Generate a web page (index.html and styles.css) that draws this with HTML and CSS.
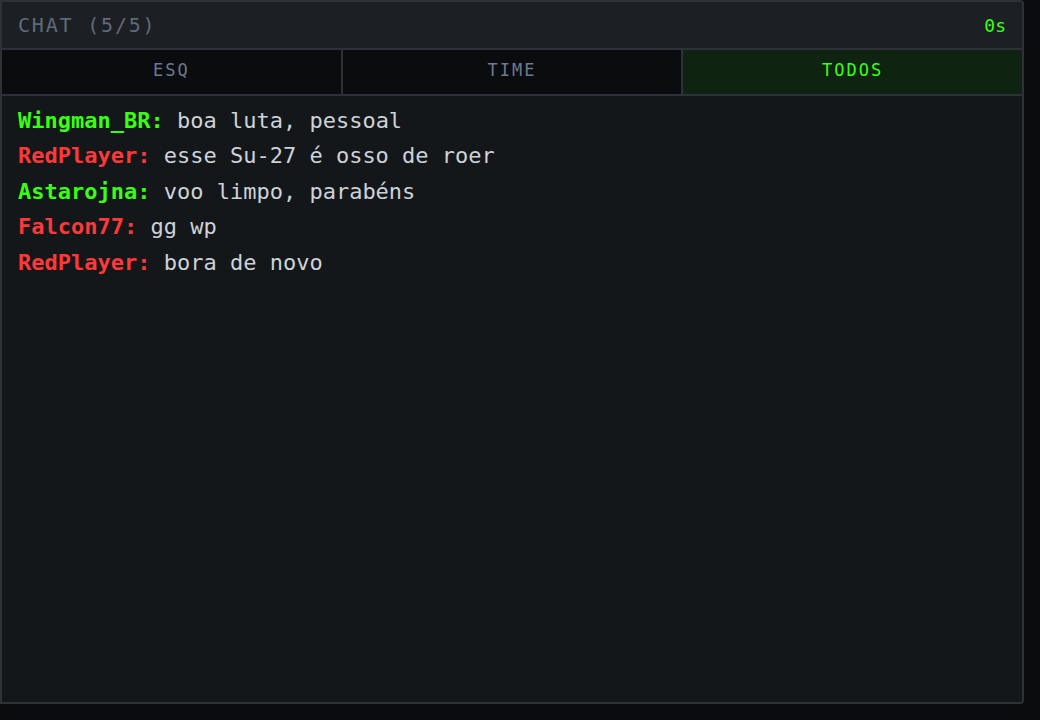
FILE: index.html
```html
<!DOCTYPE html>
<html lang="pt-BR">
<head>
    <meta charset="UTF-8">
    <meta name="viewport" content="width=device-width, initial-scale=1.0">
    <title>Chat</title>
    <link rel="stylesheet" href="styles.css">
</head>
<body>
    <div class="chat-panel">
        <div class="chat-header">
            <span class="chat-title">CHAT (5/5)</span>
            <span class="chat-timer">0s</span>
        </div>

        <div class="chat-tabs">
            <button class="tab">ESQ</button>
            <button class="tab">TIME</button>
            <button class="tab active">TODOS</button>
        </div>

        <div class="chat-messages">
            <div class="msg"><span class="name green">Wingman_BR:</span> boa luta, pessoal</div>
            <div class="msg"><span class="name red">RedPlayer:</span> esse Su-27 é osso de roer</div>
            <div class="msg"><span class="name green">Astarojna:</span> voo limpo, parabéns</div>
            <div class="msg"><span class="name red">Falcon77:</span> gg wp</div>
            <div class="msg"><span class="name red">RedPlayer:</span> bora de novo</div>
        </div>
    </div>
</body>
</html>
```

FILE: styles.css
```css
:root {
    --bg-page: #0b0c0e;
    --bg-panel: #14171a;
    --bg-header: #1c1f24;
    --border: #2e3138;
    --text-muted: #5f6b7a;
    --green: #39ff14;
    --red: #ff3838;
}

* {
    margin: 0;
    padding: 0;
    box-sizing: border-box;
    font-family: 'DejaVu Sans Mono', 'Liberation Mono', monospace;
}

body {
    background: var(--bg-page);
    width: 1040px;
    height: 720px;
}

.chat-panel {
    width: 1024px;
    height: 704px;
    background: var(--bg-panel);
    border: 2px solid var(--border);
    border-radius: 0 4px 4px 0;
    display: flex;
    flex-direction: column;
}

.chat-header {
    height: 48px;
    background: var(--bg-header);
    border-bottom: 2px solid var(--border);
    display: flex;
    align-items: center;
    justify-content: space-between;
    padding: 0 16px;
}

.chat-title {
    font-size: 20px;
    letter-spacing: 1.8px;
    color: var(--text-muted);
}

.chat-timer {
    font-size: 18px;
    color: var(--green);
}

.chat-tabs {
    display: grid;
    grid-template-columns: 1fr 1fr 1fr;
    gap: 2px;
    background: var(--border);
    border-bottom: 2px solid var(--border);
}

.tab {
    height: 44px;
    padding-bottom: 5px;
    background: #0b0c0e;
    border: none;
    color: #6b7a8f;
    font-size: 17px;
    letter-spacing: 2px;
    cursor: pointer;
}

.tab.active {
    background: #0f2410;
    color: var(--green);
}

.chat-messages {
    padding: 7px 16px;
    color: #cdd2d9;
    font-size: 22px;
    line-height: 35.4px;
}

.name {
    font-weight: bold;
}

.name.green {
    color: var(--green);
}

.name.red {
    color: var(--red);
}
```
